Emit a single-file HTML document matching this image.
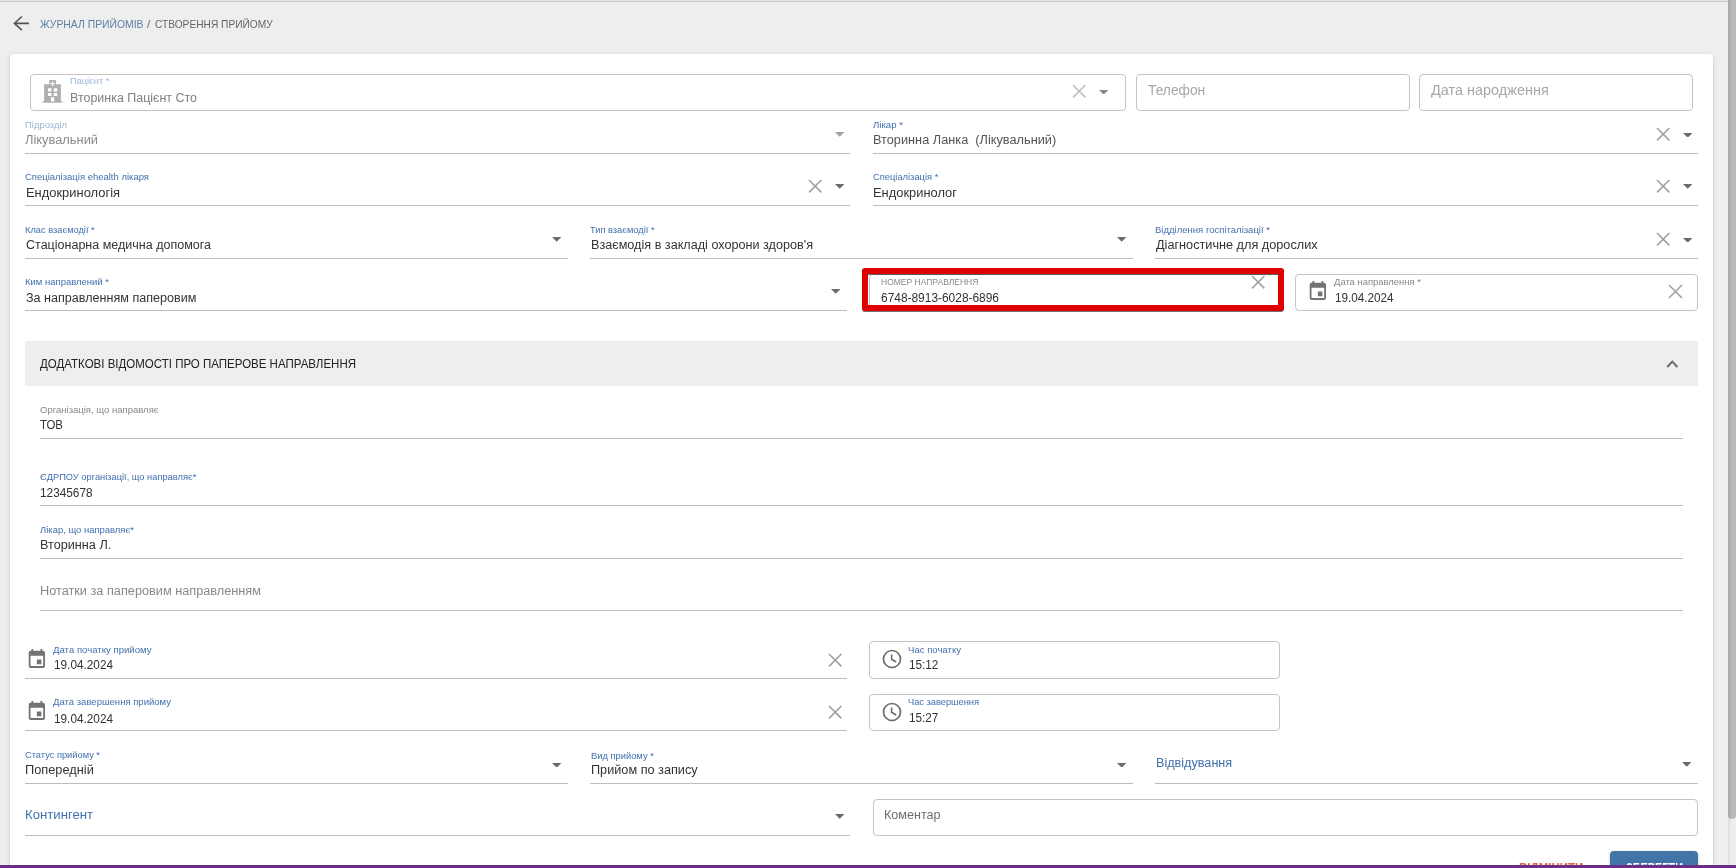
<!DOCTYPE html>
<html><head><meta charset="utf-8"><style>
html,body{margin:0;padding:0;}
body{width:1736px;height:868px;overflow:hidden;position:relative;background:#eeeeee;font-family:"Liberation Sans", sans-serif;}
.t{position:absolute;white-space:nowrap;transform-origin:0 0;}
</style></head><body>
<div style="position:absolute;left:0px;top:0px;width:1728px;height:1px;background:#e3e3e3"></div>
<div style="position:absolute;left:0px;top:1px;width:1728px;height:1px;background:#cbcbcb"></div>
<div style="position:absolute;left:10px;top:54px;width:1703px;height:900px;background:#fff;border-radius:4px;box-shadow:0 3px 1px -2px rgba(0,0,0,.2),0 2px 2px 0 rgba(0,0,0,.14),0 1px 5px 0 rgba(0,0,0,.12)"></div>
<div style="position:absolute;left:1728px;top:0px;width:8px;height:868px;background:linear-gradient(to right,#dcdcdc,#eeeeee 40%)"></div>
<div style="position:absolute;left:1728px;top:0px;width:8px;height:819px;background:linear-gradient(to right,#a6a6a6,#bababa 50%);border-radius:0 0 4px 4px"></div>
<div style="position:absolute;left:0px;top:865px;width:1736px;height:3px;background:#6b2d86"></div>
<svg style="position:absolute;left:12px;top:14px;" width="20" height="20" viewBox="0 0 20 20" preserveAspectRatio="none"><path d="M17 9.4H2.3M9.9 2.5L2.4 9.4L9.9 16.2" stroke="#555" stroke-width="1.6" fill="none"/></svg>
<span class="t" style="transform:scaleX(0.9435);left:39.80px;top:18.59px;font-size:11px;line-height:11px;color:#5b7fa6;font-weight:400;">ЖУРНАЛ ПРИЙОМІВ</span>
<span class="t" style="left:147.00px;top:18.59px;font-size:11px;line-height:11px;color:#666;font-weight:400;">/</span>
<span class="t" style="transform:scaleX(0.9256);left:155.40px;top:18.59px;font-size:11px;line-height:11px;color:#666;font-weight:400;">СТВОРЕННЯ ПРИЙОМУ</span>
<div style="position:absolute;left:30px;top:74px;width:1096px;height:37px;box-sizing:border-box;border:1px solid #c4c4c4;border-radius:4px;background:#fff"></div>
<svg style="position:absolute;left:42px;top:79px;" width="21" height="24" viewBox="0 0 21 24" preserveAspectRatio="none"><path fill="#b0b0b0" fill-rule="evenodd" d="M7.2 0.9H13.9V5.2H18.9V22.6H20.5V23.8H0.6V22.6H2.1V5.2H7.2Z M9.95 2.4V4.1H8.3V5.3H9.95V7H11.15V5.3H12.8V4.1H11.15V2.4Z M6 9.2H9.5V12.5H6Z M11.8 9.2H15.2V12.5H11.8Z M6 14H9.5V17H6Z M11.8 14H15.2V17H11.8Z M8.9 18.2H12.2V22.6H8.9Z"/></svg>
<span class="t" style="transform:scaleX(1.0254);left:69.50px;top:77.28px;font-size:9px;line-height:9px;color:#9bb5d6;font-weight:400;">Пацієнт *</span>
<span class="t" style="transform:scaleX(0.9969);left:70.00px;top:92.02px;font-size:12.5px;line-height:12.5px;color:#808080;font-weight:400;">Вторинка Пацієнт Сто</span>
<svg style="position:absolute;left:1072.3px;top:84.3px;" width="14.4" height="14.4" viewBox="0 0 14.4 14.4" preserveAspectRatio="none"><path d="M1 1L13.4 13.4M13.4 1L1 13.4" stroke="#bdbdbd" stroke-width="1.5" fill="none"/></svg>
<svg style="position:absolute;left:1099.3px;top:89.65px;" width="9.4" height="4.7" viewBox="0 0 9.4 4.7" preserveAspectRatio="none"><path d="M0 0H9.4L4.7 4.7Z" fill="#8a8a8a"/></svg>
<div style="position:absolute;left:1136px;top:74px;width:274px;height:37px;box-sizing:border-box;border:1px solid #c4c4c4;border-radius:4px;background:#fff"></div>
<span class="t" style="transform:scaleX(0.9849);left:1147.50px;top:83.15px;font-size:14px;line-height:14px;color:#a8a8a8;font-weight:400;">Телефон</span>
<div style="position:absolute;left:1419px;top:74px;width:274px;height:37px;box-sizing:border-box;border:1px solid #c4c4c4;border-radius:4px;background:#fff"></div>
<span class="t" style="transform:scaleX(1.0329);left:1430.90px;top:83.15px;font-size:14px;line-height:14px;color:#a8a8a8;font-weight:400;">Дата народження</span>
<span class="t" style="transform:scaleX(0.9930);left:25.20px;top:120.16px;font-size:9.5px;line-height:9.5px;color:#9bb5d6;font-weight:400;">Підрозділ</span>
<span class="t" style="transform:scaleX(1.0286);left:25.20px;top:134.02px;font-size:12.5px;line-height:12.5px;color:#8a8a8a;font-weight:400;">Лікувальний</span>
<svg style="position:absolute;left:834.6999999999999px;top:132.45000000000002px;" width="9.4" height="4.7" viewBox="0 0 9.4 4.7" preserveAspectRatio="none"><path d="M0 0H9.4L4.7 4.7Z" fill="#a0a0a0"/></svg>
<div style="position:absolute;left:25px;top:153px;width:825px;height:1px;background:#bdbdbd"></div>
<span class="t" style="transform:scaleX(1.0127);left:873.00px;top:119.66px;font-size:9.5px;line-height:9.5px;color:#4170ae;font-weight:400;">Лікар *</span>
<span class="t" style="transform:scaleX(1.0199);left:873.30px;top:134.42px;font-size:12.5px;line-height:12.5px;color:#555555;font-weight:400;">Вторинна Ланка&nbsp; (Лікувальний)</span>
<svg style="position:absolute;left:1655.6px;top:127.4px;" width="14.4" height="14.4" viewBox="0 0 14.4 14.4" preserveAspectRatio="none"><path d="M1 1L13.4 13.4M13.4 1L1 13.4" stroke="#9e9e9e" stroke-width="1.5" fill="none"/></svg>
<svg style="position:absolute;left:1682.6px;top:132.55px;" width="9.4" height="4.7" viewBox="0 0 9.4 4.7" preserveAspectRatio="none"><path d="M0 0H9.4L4.7 4.7Z" fill="#6b6b6b"/></svg>
<div style="position:absolute;left:873px;top:153px;width:825px;height:1px;background:#bdbdbd"></div>
<span class="t" style="transform:scaleX(0.9985);left:25.20px;top:171.96px;font-size:9.5px;line-height:9.5px;color:#4170ae;font-weight:400;">Спеціалізація ehealth лікаря</span>
<span class="t" style="transform:scaleX(1.0333);left:25.50px;top:187.22px;font-size:12.5px;line-height:12.5px;color:#333333;font-weight:400;">Ендокринологія</span>
<svg style="position:absolute;left:807.8px;top:179.10000000000002px;" width="14.4" height="14.4" viewBox="0 0 14.4 14.4" preserveAspectRatio="none"><path d="M1 1L13.4 13.4M13.4 1L1 13.4" stroke="#9e9e9e" stroke-width="1.5" fill="none"/></svg>
<svg style="position:absolute;left:834.6999999999999px;top:184.45000000000002px;" width="9.4" height="4.7" viewBox="0 0 9.4 4.7" preserveAspectRatio="none"><path d="M0 0H9.4L4.7 4.7Z" fill="#6b6b6b"/></svg>
<div style="position:absolute;left:25px;top:205px;width:825px;height:1px;background:#bdbdbd"></div>
<span class="t" style="transform:scaleX(0.9826);left:873.00px;top:171.56px;font-size:9.5px;line-height:9.5px;color:#4170ae;font-weight:400;">Спеціалізація *</span>
<span class="t" style="transform:scaleX(1.0317);left:873.30px;top:187.22px;font-size:12.5px;line-height:12.5px;color:#333333;font-weight:400;">Ендокринолог</span>
<svg style="position:absolute;left:1655.6px;top:179.3px;" width="14.4" height="14.4" viewBox="0 0 14.4 14.4" preserveAspectRatio="none"><path d="M1 1L13.4 13.4M13.4 1L1 13.4" stroke="#9e9e9e" stroke-width="1.5" fill="none"/></svg>
<svg style="position:absolute;left:1682.6px;top:184.45000000000002px;" width="9.4" height="4.7" viewBox="0 0 9.4 4.7" preserveAspectRatio="none"><path d="M0 0H9.4L4.7 4.7Z" fill="#6b6b6b"/></svg>
<div style="position:absolute;left:873px;top:205px;width:825px;height:1px;background:#bdbdbd"></div>
<span class="t" style="transform:scaleX(0.9759);left:25.30px;top:224.96px;font-size:9.5px;line-height:9.5px;color:#4170ae;font-weight:400;">Клас взаємодії *</span>
<span class="t" style="transform:scaleX(1.0014);left:25.70px;top:239.12px;font-size:12.5px;line-height:12.5px;color:#333333;font-weight:400;">Стаціонарна медична допомога</span>
<svg style="position:absolute;left:552.0999999999999px;top:237.35px;" width="9.4" height="4.7" viewBox="0 0 9.4 4.7" preserveAspectRatio="none"><path d="M0 0H9.4L4.7 4.7Z" fill="#6b6b6b"/></svg>
<div style="position:absolute;left:25px;top:258px;width:543px;height:1px;background:#bdbdbd"></div>
<span class="t" style="transform:scaleX(0.9752);left:590.30px;top:224.96px;font-size:9.5px;line-height:9.5px;color:#4170ae;font-weight:400;">Тип взаємодії *</span>
<span class="t" style="transform:scaleX(1.0104);left:590.50px;top:239.42px;font-size:12.5px;line-height:12.5px;color:#333333;font-weight:400;">Взаємодія в закладі охорони здоров'я</span>
<svg style="position:absolute;left:1117.3px;top:237.35px;" width="9.4" height="4.7" viewBox="0 0 9.4 4.7" preserveAspectRatio="none"><path d="M0 0H9.4L4.7 4.7Z" fill="#6b6b6b"/></svg>
<div style="position:absolute;left:590px;top:258px;width:543px;height:1px;background:#bdbdbd"></div>
<span class="t" style="transform:scaleX(1.0031);left:1155.30px;top:224.96px;font-size:9.5px;line-height:9.5px;color:#4170ae;font-weight:400;">Відділення госпіталізації *</span>
<span class="t" style="transform:scaleX(1.0153);left:1155.70px;top:239.12px;font-size:12.5px;line-height:12.5px;color:#333333;font-weight:400;">Діагностичне для дорослих</span>
<svg style="position:absolute;left:1655.6px;top:232.20000000000002px;" width="14.4" height="14.4" viewBox="0 0 14.4 14.4" preserveAspectRatio="none"><path d="M1 1L13.4 13.4M13.4 1L1 13.4" stroke="#9e9e9e" stroke-width="1.5" fill="none"/></svg>
<svg style="position:absolute;left:1682.6px;top:237.65px;" width="9.4" height="4.7" viewBox="0 0 9.4 4.7" preserveAspectRatio="none"><path d="M0 0H9.4L4.7 4.7Z" fill="#6b6b6b"/></svg>
<div style="position:absolute;left:1155px;top:258px;width:543px;height:1px;background:#bdbdbd"></div>
<span class="t" style="transform:scaleX(0.9987);left:25.30px;top:276.66px;font-size:9.5px;line-height:9.5px;color:#4170ae;font-weight:400;">Ким направлений *</span>
<span class="t" style="transform:scaleX(1.0070);left:25.70px;top:292.02px;font-size:12.5px;line-height:12.5px;color:#333333;font-weight:400;">За направленням паперовим</span>
<svg style="position:absolute;left:831.0px;top:289.34999999999997px;" width="9.4" height="4.7" viewBox="0 0 9.4 4.7" preserveAspectRatio="none"><path d="M0 0H9.4L4.7 4.7Z" fill="#6b6b6b"/></svg>
<div style="position:absolute;left:25px;top:310px;width:822px;height:1px;background:#bdbdbd"></div>
<div style="position:absolute;left:869px;top:274px;width:413px;height:37px;box-sizing:border-box;border:1px solid #c0c0c0;border-radius:4px;background:#fff"></div>
<span class="t" style="transform:scaleX(0.9448);left:880.60px;top:277.88px;font-size:9px;line-height:9px;color:#888888;font-weight:400;">НОМЕР НАПРАВЛЕННЯ</span>
<span class="t" style="transform:scaleX(0.9538);left:880.60px;top:291.72px;font-size:12.5px;line-height:12.5px;color:#333;font-weight:400;">6748-8913-6028-6896</span>
<svg style="position:absolute;left:1250.5px;top:275.3px;" width="14.4" height="14.4" viewBox="0 0 14.4 14.4" preserveAspectRatio="none"><path d="M1 1L13.4 13.4M13.4 1L1 13.4" stroke="#9e9e9e" stroke-width="1.5" fill="none"/></svg>
<div style="position:absolute;left:862px;top:268px;width:422px;height:43px;box-sizing:border-box;border:6px solid #e00000;border-radius:3px;filter:drop-shadow(0 1px 0.4px rgba(0,0,0,0.55))"></div>
<div style="position:absolute;left:1295px;top:274px;width:403px;height:37px;box-sizing:border-box;border:1px solid #c4c4c4;border-radius:4px;background:#fff"></div>
<svg style="position:absolute;left:1306.6px;top:279.9px;" width="21.7" height="22.9" viewBox="0 0 24 24" preserveAspectRatio="none"><path fill="#737373" d="M17 12h-5v5h5v-5zM16 1v2H8V1H6v2H5c-1.11 0-1.99.9-1.99 2L3 19c0 1.1.89 2 2 2h14c1.1 0 2-.9 2-2V5c0-1.1-.9-2-2-2h-1V1h-2zm3 18H5V8h14v11z"/></svg>
<span class="t" style="transform:scaleX(0.9915);left:1334.00px;top:276.66px;font-size:9.5px;line-height:9.5px;color:#888888;font-weight:400;">Дата направлення *</span>
<span class="t" style="transform:scaleX(0.9367);left:1335.00px;top:292.02px;font-size:12.5px;line-height:12.5px;color:#333333;font-weight:400;">19.04.2024</span>
<svg style="position:absolute;left:1668.3px;top:284.0px;" width="15" height="15" viewBox="0 0 15 15" preserveAspectRatio="none"><path d="M1 1L14 14M14 1L1 14" stroke="#9e9e9e" stroke-width="1.5" fill="none"/></svg>
<div style="position:absolute;left:25px;top:341px;width:1673px;height:45px;background:#eeeeee"></div>
<span class="t" style="transform:scaleX(0.8848);left:40.30px;top:356.70px;font-size:13px;line-height:13px;color:#222;font-weight:400;">ДОДАТКОВІ ВІДОМОСТІ ПРО ПАПЕРОВЕ НАПРАВЛЕННЯ</span>
<svg style="position:absolute;left:1664px;top:356px;" width="16" height="14" viewBox="0 0 16 14" preserveAspectRatio="none"><path d="M3.2 11L8.3 5.6L13.4 11" stroke="#6b6b6b" stroke-width="2" fill="none"/></svg>
<span class="t" style="transform:scaleX(1.0023);left:39.70px;top:404.66px;font-size:9.5px;line-height:9.5px;color:#888888;font-weight:400;">Організація, що направляє</span>
<span class="t" style="transform:scaleX(0.9149);left:40.30px;top:418.72px;font-size:12.5px;line-height:12.5px;color:#333333;font-weight:400;">ТОВ</span>
<div style="position:absolute;left:40px;top:438px;width:1643px;height:1px;background:#bdbdbd"></div>
<span class="t" style="transform:scaleX(0.9781);left:40.20px;top:472.26px;font-size:9.5px;line-height:9.5px;color:#4170ae;font-weight:400;">ЄДРПОУ організації, що направляє*</span>
<span class="t" style="transform:scaleX(0.9456);left:40.20px;top:487.42px;font-size:12.5px;line-height:12.5px;color:#333333;font-weight:400;">12345678</span>
<div style="position:absolute;left:40px;top:505px;width:1643px;height:1px;background:#bdbdbd"></div>
<span class="t" style="transform:scaleX(0.9947);left:40.20px;top:525.46px;font-size:9.5px;line-height:9.5px;color:#4170ae;font-weight:400;">Лікар, що направляє*</span>
<span class="t" style="transform:scaleX(1.0140);left:40.20px;top:539.22px;font-size:12.5px;line-height:12.5px;color:#333333;font-weight:400;">Вторинна Л.</span>
<div style="position:absolute;left:40px;top:558px;width:1643px;height:1px;background:#bdbdbd"></div>
<span class="t" style="transform:scaleX(1.0179);left:40.20px;top:584.82px;font-size:12.5px;line-height:12.5px;color:#888888;font-weight:400;">Нотатки за паперовим направленням</span>
<div style="position:absolute;left:40px;top:610px;width:1643px;height:1px;background:#bdbdbd"></div>
<svg style="position:absolute;left:25.5px;top:647.7px;" width="21.7" height="22.9" viewBox="0 0 24 24" preserveAspectRatio="none"><path fill="#737373" d="M17 12h-5v5h5v-5zM16 1v2H8V1H6v2H5c-1.11 0-1.99.9-1.99 2L3 19c0 1.1.89 2 2 2h14c1.1 0 2-.9 2-2V5c0-1.1-.9-2-2-2h-1V1h-2zm3 18H5V8h14v11z"/></svg>
<span class="t" style="transform:scaleX(1.0088);left:53.10px;top:644.96px;font-size:9.5px;line-height:9.5px;color:#4170ae;font-weight:400;">Дата початку прийому</span>
<span class="t" style="transform:scaleX(0.9431);left:53.70px;top:658.92px;font-size:12.5px;line-height:12.5px;color:#333333;font-weight:400;">19.04.2024</span>
<svg style="position:absolute;left:828.1999999999999px;top:652.8px;" width="14.4" height="14.4" viewBox="0 0 14.4 14.4" preserveAspectRatio="none"><path d="M1 1L13.4 13.4M13.4 1L1 13.4" stroke="#9e9e9e" stroke-width="1.5" fill="none"/></svg>
<div style="position:absolute;left:25px;top:678px;width:822px;height:1px;background:#bdbdbd"></div>
<div style="position:absolute;left:869px;top:641px;width:411px;height:38px;box-sizing:border-box;border:1px solid #c4c4c4;border-radius:4px;background:#fff"></div>
<svg style="position:absolute;left:880.8px;top:648.3px;" width="22" height="22" viewBox="0 0 22 22" preserveAspectRatio="none"><circle cx="11" cy="11" r="8.5" stroke="#6b6b6b" stroke-width="1.7" fill="none"/><path d="M10.6 6.4V11.3L15.2 14" stroke="#6b6b6b" stroke-width="1.6" fill="none"/></svg>
<span class="t" style="transform:scaleX(1.0071);left:908.20px;top:644.96px;font-size:9.5px;line-height:9.5px;color:#4170ae;font-weight:400;">Час початку</span>
<span class="t" style="transform:scaleX(0.9399);left:908.80px;top:658.82px;font-size:12.5px;line-height:12.5px;color:#333333;font-weight:400;">15:12</span>
<svg style="position:absolute;left:25.5px;top:699.6px;" width="21.7" height="22.9" viewBox="0 0 24 24" preserveAspectRatio="none"><path fill="#737373" d="M17 12h-5v5h5v-5zM16 1v2H8V1H6v2H5c-1.11 0-1.99.9-1.99 2L3 19c0 1.1.89 2 2 2h14c1.1 0 2-.9 2-2V5c0-1.1-.9-2-2-2h-1V1h-2zm3 18H5V8h14v11z"/></svg>
<span class="t" style="transform:scaleX(1.0024);left:53.10px;top:696.76px;font-size:9.5px;line-height:9.5px;color:#4170ae;font-weight:400;">Дата завершення прийому</span>
<span class="t" style="transform:scaleX(0.9431);left:53.70px;top:712.62px;font-size:12.5px;line-height:12.5px;color:#333333;font-weight:400;">19.04.2024</span>
<svg style="position:absolute;left:828.1999999999999px;top:704.5999999999999px;" width="14.4" height="14.4" viewBox="0 0 14.4 14.4" preserveAspectRatio="none"><path d="M1 1L13.4 13.4M13.4 1L1 13.4" stroke="#9e9e9e" stroke-width="1.5" fill="none"/></svg>
<div style="position:absolute;left:25px;top:730px;width:822px;height:1px;background:#bdbdbd"></div>
<div style="position:absolute;left:869px;top:694px;width:411px;height:37px;box-sizing:border-box;border:1px solid #c4c4c4;border-radius:4px;background:#fff"></div>
<svg style="position:absolute;left:880.8px;top:701px;" width="22" height="22" viewBox="0 0 22 22" preserveAspectRatio="none"><circle cx="11" cy="11" r="8.5" stroke="#6b6b6b" stroke-width="1.7" fill="none"/><path d="M10.6 6.4V11.3L15.2 14" stroke="#6b6b6b" stroke-width="1.6" fill="none"/></svg>
<span class="t" style="transform:scaleX(0.9766);left:908.20px;top:696.76px;font-size:9.5px;line-height:9.5px;color:#4170ae;font-weight:400;">Час завершення</span>
<span class="t" style="transform:scaleX(0.9399);left:908.80px;top:712.42px;font-size:12.5px;line-height:12.5px;color:#333333;font-weight:400;">15:27</span>
<span class="t" style="transform:scaleX(0.9774);left:25.20px;top:749.96px;font-size:9.5px;line-height:9.5px;color:#4170ae;font-weight:400;">Статус прийому *</span>
<span class="t" style="transform:scaleX(1.0230);left:25.20px;top:763.92px;font-size:12.5px;line-height:12.5px;color:#333333;font-weight:400;">Попередній</span>
<svg style="position:absolute;left:552.3px;top:762.65px;" width="9.4" height="4.7" viewBox="0 0 9.4 4.7" preserveAspectRatio="none"><path d="M0 0H9.4L4.7 4.7Z" fill="#6b6b6b"/></svg>
<div style="position:absolute;left:25px;top:783px;width:543px;height:1px;background:#bdbdbd"></div>
<span class="t" style="transform:scaleX(0.9832);left:590.50px;top:750.56px;font-size:9.5px;line-height:9.5px;color:#4170ae;font-weight:400;">Вид прийому *</span>
<span class="t" style="transform:scaleX(1.0146);left:590.50px;top:763.92px;font-size:12.5px;line-height:12.5px;color:#333333;font-weight:400;">Прийом по запису</span>
<svg style="position:absolute;left:1117.3px;top:762.65px;" width="9.4" height="4.7" viewBox="0 0 9.4 4.7" preserveAspectRatio="none"><path d="M0 0H9.4L4.7 4.7Z" fill="#6b6b6b"/></svg>
<div style="position:absolute;left:590px;top:783px;width:543px;height:1px;background:#bdbdbd"></div>
<span class="t" style="transform:scaleX(1.0105);left:1155.70px;top:756.82px;font-size:12.5px;line-height:12.5px;color:#4170ae;font-weight:400;">Відвідування</span>
<svg style="position:absolute;left:1682.3px;top:762.15px;" width="9.4" height="4.7" viewBox="0 0 9.4 4.7" preserveAspectRatio="none"><path d="M0 0H9.4L4.7 4.7Z" fill="#6b6b6b"/></svg>
<div style="position:absolute;left:1155px;top:783px;width:543px;height:1px;background:#bdbdbd"></div>
<span class="t" style="transform:scaleX(1.0538);left:25.20px;top:808.82px;font-size:12.5px;line-height:12.5px;color:#4170ae;font-weight:400;">Контингент</span>
<svg style="position:absolute;left:834.6999999999999px;top:814.25px;" width="9.4" height="4.7" viewBox="0 0 9.4 4.7" preserveAspectRatio="none"><path d="M0 0H9.4L4.7 4.7Z" fill="#6b6b6b"/></svg>
<div style="position:absolute;left:25px;top:835px;width:825px;height:1px;background:#bdbdbd"></div>
<div style="position:absolute;left:873px;top:799px;width:825px;height:37px;box-sizing:border-box;border:1px solid #c4c4c4;border-radius:4px;background:#fff"></div>
<span class="t" style="transform:scaleX(1.0058);left:884.30px;top:809.22px;font-size:12.5px;line-height:12.5px;color:#6e6e6e;font-weight:400;">Коментар</span>
<div style="position:absolute;left:1610px;top:851px;width:88px;height:40px;background:#4274a8;border-radius:4px;box-shadow:0 1px 3px rgba(0,0,0,0.25)"></div>
<span class="t" style="transform:scaleX(0.8696);left:1625.80px;top:861.62px;font-size:12.5px;line-height:12.5px;color:#fff;font-weight:700;">ЗБЕРЕГТИ</span>
<span class="t" style="transform:scaleX(0.9182);left:1518.70px;top:861.82px;font-size:12.5px;line-height:12.5px;color:#e4604a;font-weight:700;">ВІДМІНИТИ</span>
<div style="position:absolute;left:0px;top:865px;width:1736px;height:3px;background:#6b2d86"></div>
</body></html>
